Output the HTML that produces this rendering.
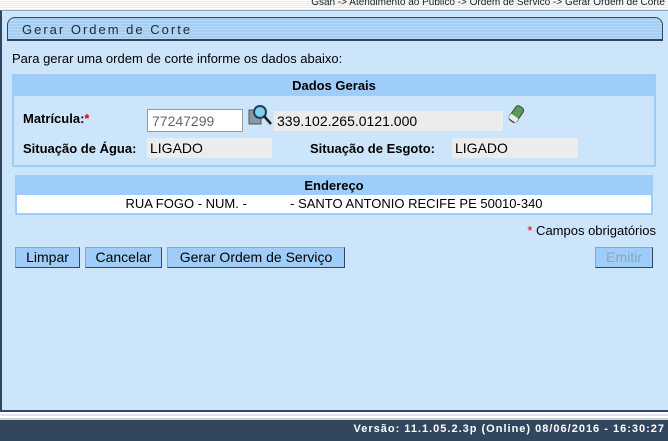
<!DOCTYPE html>
<html><head><meta charset="utf-8"><style>
*{margin:0;padding:0;box-sizing:border-box}
body{width:668px;height:441px;overflow:hidden;background:#fff;font-family:"Liberation Sans",sans-serif;font-size:13px;color:#000;position:relative}
.abs{position:absolute}
.top{left:0;top:0;width:668px;height:10px;background:repeating-linear-gradient(#fff 0 1px,#e4ecf4 1px 2px)}
.bc{right:3px;top:-3px;font-size:10px;color:#222;white-space:nowrap}
.panel{left:0;top:10px;width:668px;height:401px;background:#cce5fb;border-left:2px solid #32475e;border-top:1px solid #8aa6c0}
.title{left:7px;top:17px;width:656px;height:24px;border:1px solid #32475e;border-bottom:2px solid #32475e;border-radius:8px 8px 0 0;background:repeating-linear-gradient(#a6cdf2 0 2px,#b8d8f6 2px 3px)}
.title span{position:absolute;left:14px;top:4px;font-size:13px;letter-spacing:2px;color:#1a2a3a}
.fs{left:12px;top:74px;width:644px;height:93px;border:2px solid #9ccdf7;background:#cce5fb}
.hdr{background:#9dcdf8;font-weight:bold;text-align:center;height:20px;line-height:20px}
.lbl{font-weight:bold}
.gray{background:#ececec;height:20px;line-height:20px;padding-left:3px}
.btn{top:247px;height:21px;line-height:19px;background:#9dcdf8;border:1px solid #8aa;border-right-color:#32475e;border-bottom-color:#32475e;text-align:center;font-size:14px}
.foot{left:0;top:420px;width:668px;height:21px;background:#32475e;color:#fff;font-weight:bold;font-size:11px;letter-spacing:1px;text-align:right;padding-right:3px;line-height:19px}
</style></head><body>
<div class="abs top"></div>
<div class="abs bc">Gsan -&gt; Atendimento ao Publico -&gt; Ordem de Servico -&gt; Gerar Ordem de Corte</div>
<div class="abs panel"></div>
<div class="abs title"><span>Gerar Ordem de Corte</span></div>
<div class="abs" style="left:12px;top:51px">Para gerar uma ordem de corte informe os dados abaixo:</div>
<div class="abs fs"><div class="hdr">Dados Gerais</div></div>
<div class="abs lbl" style="left:23px;top:111px">Matrícula:<span style="color:#d00">*</span></div>
<div class="abs" style="left:147px;top:109px;width:96px;height:23px;background:#fff;border:1px solid #999;color:#666;padding:3px 0 0 4px;font-size:14px">77247299</div>
<svg class="abs" style="left:247px;top:104px" width="26" height="24" viewBox="0 0 26 24"><rect x="2" y="6" width="12" height="14" fill="#8a98a6" stroke="#555"/><circle cx="13" cy="8" r="6" fill="#7fd0e8" stroke="#204060" stroke-width="2"/><line x1="17" y1="12" x2="24" y2="20" stroke="#222" stroke-width="2.5"/></svg>
<div class="abs gray" style="left:274px;top:111px;width:229px;font-size:14px">339.102.265.0121.000</div>
<svg class="abs" style="left:507px;top:104px" width="20" height="22" viewBox="0 0 20 22"><rect x="5" y="2" width="9" height="17" rx="3" transform="rotate(35 10 10)" fill="#5a9a5a" stroke="#444"/><rect x="5" y="13" width="9" height="5" transform="rotate(35 10 10)" fill="#eee"/></svg>
<div class="abs lbl" style="left:23px;top:141px">Situação de Água:</div>
<div class="abs gray" style="left:147px;top:138px;width:125px;font-size:14px">LIGADO</div>
<div class="abs lbl" style="left:310px;top:141px">Situação de Esgoto:</div>
<div class="abs gray" style="left:452px;top:138px;width:126px;font-size:14px">LIGADO</div>
<div class="abs" style="left:15px;top:175px;width:638px;height:40px;border:2px solid #9dcdf8;background:#fff">
<div class="hdr" style="height:18px;line-height:18px">Endereço</div>
<div style="text-align:center;line-height:18px">RUA FOGO - NUM. - &nbsp;&nbsp;&nbsp;&nbsp;&nbsp;&nbsp;&nbsp;&nbsp;&nbsp;&nbsp; - SANTO ANTONIO RECIFE PE 50010-340</div></div>
<div class="abs" style="right:12px;top:223px"><span style="color:#d00">*</span> Campos obrigatórios</div>
<div class="abs btn" style="left:15px;width:65px">Limpar</div>
<div class="abs btn" style="left:85px;width:77px">Cancelar</div>
<div class="abs btn" style="left:167px;width:178px">Gerar Ordem de Serviço</div>
<div class="abs btn" style="left:595px;width:58px;color:#8ab">Emitir</div>
<div class="abs" style="left:0;top:410px;width:668px;height:10px;background:linear-gradient(#32475e 0 2px,#fff 2px 4px,#dde6ee 4px 6px,#fff 6px 8px,#c8d4e0 8px 10px)"></div>
<div class="abs foot">Versão: 11.1.05.2.3p (Online) 08/06/2016 - 16:30:27</div>
</body></html>
